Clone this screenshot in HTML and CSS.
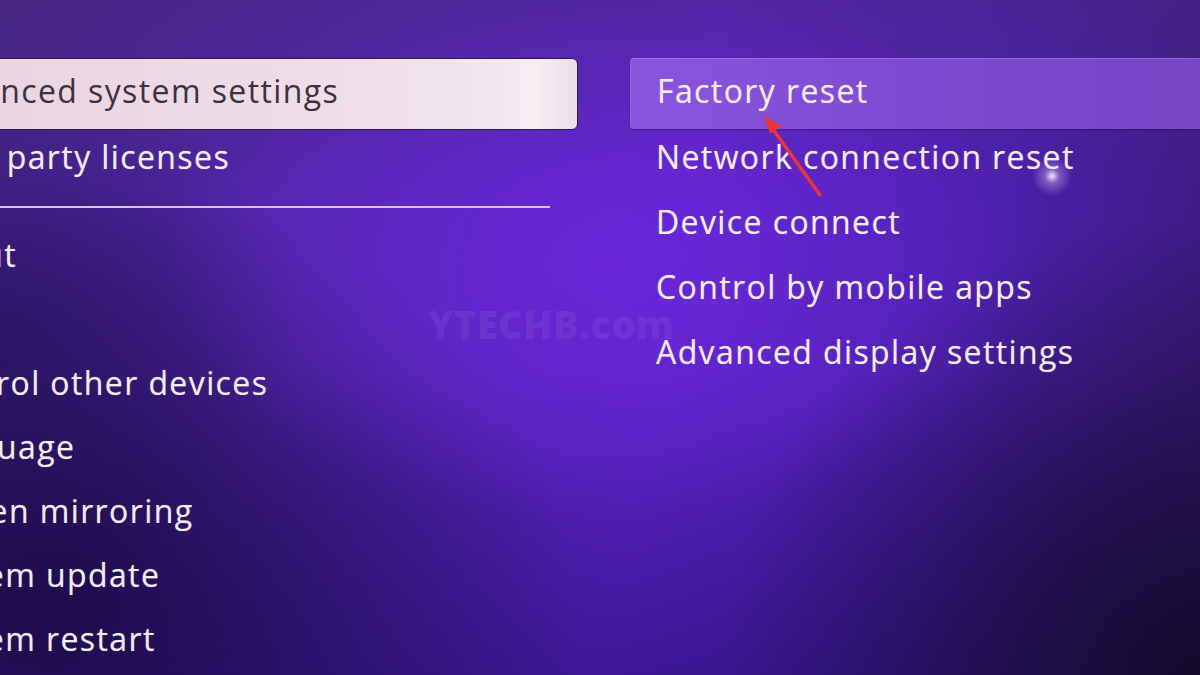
FILE: index.html
```html
<!DOCTYPE html>
<html>
<head>
<meta charset="utf-8">
<link rel="stylesheet" href="styles.css">
</head>
<body>
<div class="screen">
  <div class="col left">
    <div class="item focused">Advanced system settings</div>
    <div class="item short licenses">Third party licenses</div>
    <div class="sep"></div>
    <div class="item">About</div>
    <div class="item">Time</div>
    <div class="item">Control other devices</div>
    <div class="item">Language</div>
    <div class="item">Screen mirroring</div>
    <div class="item">System update</div>
    <div class="item">System restart</div>
  </div>
  <div class="col right">
    <div class="item selected">Factory reset</div>
    <div class="item">Network connection reset</div>
    <div class="item">Device connect</div>
    <div class="item">Control by mobile apps</div>
    <div class="item">Advanced display settings</div>
  </div>
  <div class="watermark">YTECHB.com</div>
  <div class="glare"></div>
  <svg class="arrow" width="1200" height="675" viewBox="0 0 1200 675">
    <line x1="820" y1="195" x2="772" y2="128" stroke="#e8343c" stroke-width="3.5" stroke-linecap="round"/>
    <polygon points="764,116 782,126 770,134" fill="#e8343c"/>
  </svg>
</div>
</body>
</html>
```
FILE: styles.css
```css
html, body {
  margin: 0;
  padding: 0;
}
body {
  width: 1200px;
  height: 675px;
  overflow: hidden;
  font-family: "Open Sans", Lato, sans-serif;
}
.screen {
  position: relative;
  width: 1200px;
  height: 675px;
  overflow: hidden;
  display: flex;
  gap: 52px;
  background:
    radial-gradient(ellipse 440px 260px at 600px 260px, rgba(116, 40, 232, 0.55), rgba(116, 40, 232, 0) 100%),
    radial-gradient(ellipse 520px 420px at 60px 600px, rgba(22, 8, 60, 0.8), rgba(22, 8, 60, 0) 100%),
    radial-gradient(ellipse 480px 460px at 1200px 675px, rgba(18, 10, 40, 0.95), rgba(18, 10, 40, 0) 100%),
    radial-gradient(ellipse 300px 260px at 0px 330px, rgba(30, 12, 90, 0.45), rgba(30, 12, 90, 0) 100%),
    linear-gradient(180deg, rgba(70, 40, 120, 0.45) 0%, rgba(70, 40, 120, 0) 28%, rgba(30, 10, 90, 0) 55%, rgba(30, 10, 100, 0.5) 100%),
    linear-gradient(100deg, #47258a 0%, #5526b6 35%, #5d24c8 55%, #4c20ac 78%, #3a1a78 100%);
}
.col {
  display: flex;
  flex-direction: column;
  padding-top: 58px;
}
.left {
  width: 678px;
  margin-left: -100px;
  flex: none;
}
.right {
  flex: 1;
  margin-right: -40px;
}
.item {
  height: 64px;
  line-height: 64px;
  font-size: 32px;
  color: #f2ecf6;
  letter-spacing: 1.4px;
  white-space: nowrap;
  padding-left: 20px;
  text-shadow: 0 0 1px rgba(255, 255, 255, 0.4);
  flex: none;
}
.left .item {
  line-height: 67px;
}
.left .focused {
  height: 70px;
  line-height: 64px;
  color: #3b3140;
  background: linear-gradient(90deg, #e9d3df 0%, #eedde6 60%, #f2e6ee 88%, #f6eef3 94%, #ecdde7 100%);
  border: 1.5px solid #2d1a55;
  border-radius: 6px;
  text-shadow: none;
}
.left .short {
  height: 52px;
  line-height: 54px;
}
.left .licenses {
  padding-left: 12px;
}
.sep {
  height: 2px;
  margin: 24px 28px 13px 0;
  background: #dcc2ea;
  flex: none;
}
.right .item {
  height: 65px;
  padding-left: 26px;
}
.right .selected {
  height: 70px;
  line-height: 64px;
  margin-bottom: -4px;
  border-radius: 4px;
  background: linear-gradient(90deg, #8a54dc 0%, #7d49d0 50%, #7445c4 100%);
  border-top: 1px solid rgba(200, 170, 255, 0.35);
  border-left: 1px solid rgba(200, 170, 255, 0.35);
  box-shadow: 0 1px 2px rgba(30, 10, 80, 0.4);
}
.watermark {
  position: absolute;
  left: 428px;
  top: 298px;
  font-family: "Open Sans", sans-serif;
  font-weight: 800;
  font-size: 38px;
  letter-spacing: 0.5px;
  color: rgba(255, 255, 255, 0.07);
}
.glare {
  position: absolute;
  left: 1032px;
  top: 156px;
  width: 40px;
  height: 40px;
  border-radius: 50%;
  background: radial-gradient(circle, rgba(255, 255, 255, 0.9) 0%, rgba(230, 210, 255, 0.35) 25%, rgba(200, 170, 255, 0) 70%);
}
.arrow {
  position: absolute;
  left: 0;
  top: 0;
}
```
